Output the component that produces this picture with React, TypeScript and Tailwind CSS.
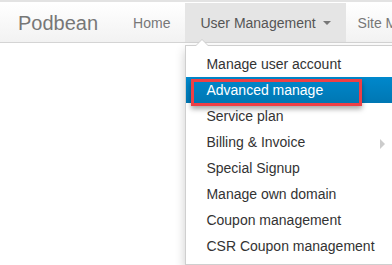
import React from "react";

const items = [
  { label: "Manage user account" },
  { label: "Advanced manage", active: true },
  { label: "Service plan" },
  { label: "Billing & Invoice", submenu: true },
  { label: "Special Signup" },
  { label: "Manage own domain" },
  { label: "Coupon management" },
  { label: "CSR Coupon management" },
];

export default function App() {
  return (
    <div
      className="relative h-[265px] w-[392px] overflow-hidden bg-white"
      style={{ fontFamily: '"Liberation Sans", Arial, sans-serif' }}
    >
      <div className="border-t-2 border-[#e3e3e3]">
        <div className="flex h-[41px] items-stretch border-t border-b border-[#d4d4d4] bg-gradient-to-b from-white to-[#f2f2f2] border-t-white">
          <a className="block whitespace-nowrap pl-[18px] pr-[20px] pt-[7px] text-[20px] leading-[26px] text-[#777]">
            Podbean
          </a>
          <a className="block whitespace-nowrap px-[15px] pt-[10px] text-[14px] leading-[20px] text-[#777]">
            Home
          </a>
          <div className="relative">
            <a className="flex h-full items-start whitespace-nowrap bg-[#e5e5e5] px-[15px] pt-[10px] text-[14px] leading-[20px] text-[#555]">
              User Management
              <span className="ml-[7px] mt-[8px] h-0 w-0 border-x-[4px] border-t-[4px] border-x-transparent border-t-[#777]" />
            </a>
            {/* dropdown menu */}
            <div className="absolute left-0 top-[42px] z-10 w-[230px] border border-[#cfcfcf] bg-white py-[5px] shadow-[0_5px_10px_rgba(0,0,0,0.2)]">
              <span className="absolute -top-[7px] left-[9px] h-0 w-0 border-x-[7px] border-b-[7px] border-x-transparent border-b-[#cfcfcf]" />
              <span className="absolute -top-[6px] left-[10px] h-0 w-0 border-x-[6px] border-b-[6px] border-x-transparent border-b-white" />
              {items.map((it) => (
                <div
                  key={it.label}
                  className={
                    "relative whitespace-nowrap px-[20px] py-[3px] text-[14px] leading-[20px] " +
                    (it.active
                      ? "bg-gradient-to-b from-[#0088cc] to-[#0077b3] text-white"
                      : "text-[#333]")
                  }
                >
                  {it.label}
                  {it.submenu && (
                    <span className="absolute left-[194px] top-[10px] h-0 w-0 border-y-[5px] border-l-[5px] border-y-transparent border-l-[#cccccc]" />
                  )}
                  {it.active && (
                    <span className="absolute left-[5px] top-[2px] h-[27px] w-[171px] border-[3px] border-[#ef3f45] shadow-[0_3px_5px_rgba(0,0,0,0.35)]" />
                  )}
                </div>
              ))}
            </div>
          </div>
          <a className="block whitespace-nowrap px-[12px] pt-[10px] text-[14px] leading-[20px] text-[#777]">
            Site Management
          </a>
        </div>
      </div>
    </div>
  );
}
